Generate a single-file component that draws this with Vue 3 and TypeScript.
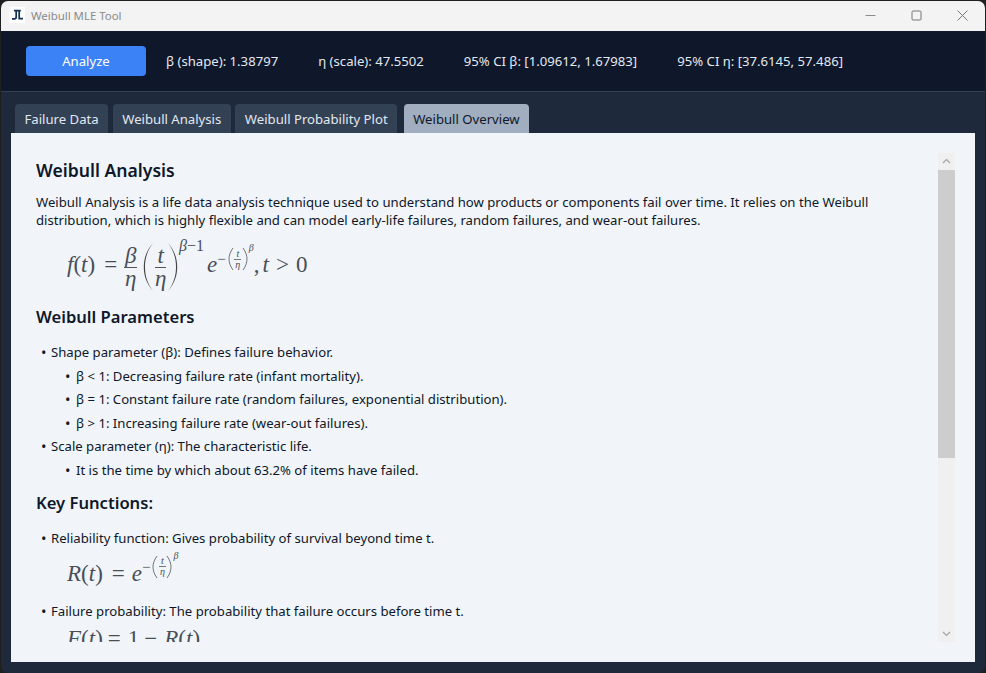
<template>
  <div class="window">
    <div class="titlebar">
      <span class="logo">
        <svg width="16" height="16" viewBox="0 0 16 16">
          <rect width="16" height="16" fill="#fff" />
          <path d="M5 3.600h4M7.200 3.600v6.400q0 1.800-1.800 1.800h-2.400M8.800 3.600h3M10.200 3.600v8h3.800" fill="none" stroke="#12304f" stroke-width="1.700" />
        </svg>
      </span>
      <span class="app-title">Weibull MLE Tool</span>
      <div class="win-controls">
        <svg width="11" height="11" viewBox="0 0 11 11"><path d="M0.500 5.500h10" stroke="#8c8c8c" /></svg>
        <svg width="11" height="11" viewBox="0 0 11 11"><rect x="1" y="1" width="9" height="9" rx="1" fill="none" stroke="#777" /></svg>
        <svg width="11" height="11" viewBox="0 0 11 11"><path d="M0.500 0.500l10 10M10.500 0.500l-10 10" stroke="#777" /></svg>
      </div>
    </div>

    <div class="toolbar">
      <button class="analyze">Analyze</button>
      <span v-for="stat in stats" :key="stat" class="stat">{{ stat }}</span>
    </div>

    <div class="main">
      <div class="tabs">
        <div v-for="tab in tabs" :key="tab" class="tab" :class="{ active: tab === activeTab }">{{ tab }}</div>
      </div>
      <div class="panel">
        <div class="scroll-content">
          <h2>Weibull Analysis</h2>
          <p>Weibull Analysis is a life data analysis technique used to understand how products or components fail over time. It relies on the Weibull distribution, which is highly flexible and can model early-life failures, random failures, and wear-out failures.</p>

          <div class="math eq1">
            <i>f</i><span>(</span><i>t</i><span>)</span><span class="op">=</span>
            <span class="frac first"><i>β</i><b></b><i>η</i></span>
            <svg class="paren" width="11" height="50" viewBox="0 0 11 50"><path d="M10 1C4 9 2 17 2 25s2 16 8 24C3 41 .8 33 .8 25S3 9 10 1z" /></svg>
            <span class="frac"><i>t</i><b></b><i>η</i></span>
            <svg class="paren" width="11" height="50" viewBox="0 0 11 50"><path d="M1 1c6 8 8 16 8 24s-2 16-8 24c7-8 9.200-16 9.200-24S8 9 1 1z" /></svg>
            <span class="sup"><i>β</i>−1</span>
            <i class="e">e</i>
            <span class="exp">
              <span>−</span>
              <svg class="mini-paren" width="6" height="24" viewBox="0 0 6 24"><path d="M5 1C2 5 1 9 1 12s1 7 4 11" /></svg>
              <span class="mini-frac"><i>t</i><b></b><i>η</i></span>
              <svg class="mini-paren" width="6" height="24" viewBox="0 0 6 24"><path d="M1 1c3 4 4 8 4 11s-1 7-4 11" /></svg>
              <i class="mini-sup">β</i>
            </span>
            <span class="comma">,</span><i>t</i><span class="op rel">&gt;</span><span>0</span>
          </div>

          <h3>Weibull Parameters</h3>
          <ul class="params">
            <li>Shape parameter (β): Defines failure behavior.
              <ul>
                <li>β &lt; 1: Decreasing failure rate (infant mortality).</li>
                <li>β = 1: Constant failure rate (random failures, exponential distribution).</li>
                <li>β &gt; 1: Increasing failure rate (wear-out failures).</li>
              </ul>
            </li>
            <li>Scale parameter (η): The characteristic life.
              <ul>
                <li>It is the time by which about 63.2% of items have failed.</li>
              </ul>
            </li>
          </ul>

          <h3>Key Functions:</h3>
          <ul>
            <li>Reliability function: Gives probability of survival beyond time t.</li>
          </ul>
          <div class="math eq2">
            <i>R</i><span>(</span><i>t</i><span>)</span><span class="op">=</span><i>e</i>
            <span class="exp">
              <span>−</span>
              <svg class="mini-paren" width="6" height="24" viewBox="0 0 6 24"><path d="M5 1C2 5 1 9 1 12s1 7 4 11" /></svg>
              <span class="mini-frac"><i>t</i><b></b><i>η</i></span>
              <svg class="mini-paren" width="6" height="24" viewBox="0 0 6 24"><path d="M1 1c3 4 4 8 4 11s-1 7-4 11" /></svg>
              <i class="mini-sup">β</i>
            </span>
          </div>
          <ul>
            <li>Failure probability: The probability that failure occurs before time t.</li>
          </ul>
          <div class="math eq3">
            <i>F</i><span>(</span><i>t</i><span>)</span><span class="op">=</span><span>1</span><span class="op">−</span><i>R</i><span>(</span><i>t</i><span>)</span>
          </div>
        </div>
        <div class="scrollbar">
          <svg class="arrow" width="17" height="17" viewBox="0 0 17 17"><path d="M5 10l3.500-3.500L12 10" /></svg>
          <div class="track"><div class="thumb"></div></div>
          <svg class="arrow" width="17" height="17" viewBox="0 0 17 17"><path d="M5 7l3.500 3.500L12 7" /></svg>
        </div>
      </div>
    </div>
  </div>
</template>

<script setup lang="ts">
const stats: string[] = [
  "β (shape): 1.38797",
  "η (scale): 47.5502",
  "95% CI β: [1.09612, 1.67983]",
  "95% CI η: [37.6145, 57.486]",
];
const tabs: string[] = ["Failure Data", "Weibull Analysis", "Weibull Probability Plot", "Weibull Overview"];
const activeTab = "Weibull Overview";
</script>

<style>
html,
body {
  margin: 0;
  background: #1f1f1f;
}
</style>

<style scoped>
.window {
  width: 986px;
  height: 673px;
  display: flex;
  flex-direction: column;
  box-sizing: border-box;
  padding: 1px 1px 0 1px;
  font-family: "Noto Sans", "Open Sans", sans-serif;
  overflow: hidden;
}
.titlebar {
  height: 30px;
  box-sizing: border-box;
  flex: none;
  display: flex;
  align-items: center;
  background: #f3f3f3;
  border-radius: 7px 7px 0 0;
  padding: 0 0 2px 8px;
}
.logo {
  width: 16px;
  height: 16px;
  display: block;
  margin-right: 6px;
}
.logo svg {
  display: block;
}
.app-title {
  font-size: 11.400px;
  color: #8a8a8a;
}
.win-controls {
  margin-left: auto;
  display: flex;
  align-items: center;
  gap: 35px;
  padding-right: 17px;
}
.win-controls svg {
  display: block;
}
.toolbar {
  height: 60px;
  flex: none;
  display: flex;
  align-items: center;
  background: #0f172a;
  border-bottom: 1px solid #334155;
  padding-left: 25px;
  color: #e2e8f0;
  font-size: 13.150px;
}
.analyze {
  width: 120px;
  height: 30px;
  border: 0;
  border-radius: 4px;
  background: #3b82f6;
  color: #fff;
  font: inherit;
  margin-right: 20px;
}
.stat {
  margin-right: 40px;
}
.main {
  flex: 1;
  min-height: 0;
  display: flex;
  flex-direction: column;
  background: #1e293b;
  padding: 12px 10px 11px 10px;
  border-radius: 0 0 7px 7px;
}
.tabs {
  display: flex;
  gap: 4.500px;
  padding-left: 4px;
  height: 29px;
  flex: none;
}
.tab {
  padding: 2px 9.500px 0;
  line-height: 27px;
  background: #334155;
  color: #e2e8f0;
  font-size: 13.150px;
  border-radius: 4px 4px 0 0;
}
.tab.active {
  background: #a0aec0;
  color: #0f172a;
  margin-left: 2px;
}
.panel {
  flex: 1;
  min-height: 0;
  display: flex;
  background: #f1f5f9;
  padding: 20px;
}
.scroll-content {
  flex: 1;
  min-width: 0;
  overflow: hidden;
  padding: 5px 16px 0 5px;
  color: #0f172a;
  font-size: 13.150px;
  line-height: 18px;
}
h2 {
  margin: 0 0 11px;
  font-size: 17.600px;
  font-weight: 600;
  line-height: 24px;
}
h3 {
  margin: 0 0 14px;
  font-size: 16.600px;
  font-weight: 600;
  line-height: 24px;
}
p {
  margin: 0 0 7px;
}
ul {
  list-style: none;
  margin: 0;
  padding: 0;
}
.params {
  margin-bottom: 12px;
}
li {
  position: relative;
  padding-left: 15px;
  margin-top: 5.600px;
}
li::before {
  content: "•";
  position: absolute;
  left: 5px;
  font-size: 14.500px;
}
li li {
  padding-left: 10px;
  margin-left: 15px;
}
li li::before {
  left: -1px;
}
.math {
  display: flex;
  align-items: center;
  font-family: "Liberation Serif", serif;
  font-size: 23px;
  color: #484e58;
  margin-left: 31px;
}
.eq1 {
  height: 58px;
  margin-bottom: 11px;
}
.eq2 {
  height: 43px;
  margin-top: 6px;
  margin-bottom: 1px;
}
.eq3 {
  height: 26px;
  margin-top: 6px;
}
.op {
  margin: 0 7px 0 9px;
}
.op.rel {
  margin: 0 7px;
}
.eq3 .op {
  margin: 0 7px 0 5px;
}
.frac {
  display: inline-flex;
  flex-direction: column;
  align-items: center;
  margin: 4px 1px 0;
  line-height: 22px;
  width: 11px;
}
.frac.first {
  width: 13px;
  margin-left: 0;
  margin-right: 6px;
}
.frac b {
  display: block;
  width: 100%;
  height: 1px;
  background: #555;
}
.paren {
  fill: #444;
  flex: none;
  margin-top: 4px;
}
.sup {
  font-size: 16px;
  align-self: flex-start;
  margin: 1px 0 0 1px;
}
.e {
  margin-left: 3px;
}
.exp {
  display: inline-flex;
  align-items: center;
  align-self: flex-start;
  font-size: 15px;
  margin-top: 11px;
}
.eq2 .exp {
  margin-top: 2px;
}
.mini-paren {
  fill: none;
  stroke: #555;
  stroke-width: 0.800;
  flex: none;
}
.mini-paren:first-of-type {
  margin-left: 2px;
}
.mini-frac {
  display: inline-flex;
  flex-direction: column;
  align-items: center;
  font-size: 10px;
  line-height: 10px;
  width: 8px;
}
.mini-frac b {
  display: block;
  width: 7px;
  height: 1px;
  background: #777;
}
.mini-sup {
  font-size: 10px;
  line-height: 11px;
  align-self: flex-start;
  margin: -5px 0 0 1px;
}
.comma {
  margin: 0 3px 0 0;
}
.scrollbar {
  width: 17px;
  flex: none;
  display: flex;
  flex-direction: column;
  background: #f0f0f0;
}
.arrow {
  flex: none;
  display: block;
  fill: none;
  stroke: #a3a3a3;
  stroke-width: 1.200;
}
.track {
  flex: 1;
  min-height: 0;
}
.thumb {
  height: 288px;
  background: #cdcdcd;
}
</style>
